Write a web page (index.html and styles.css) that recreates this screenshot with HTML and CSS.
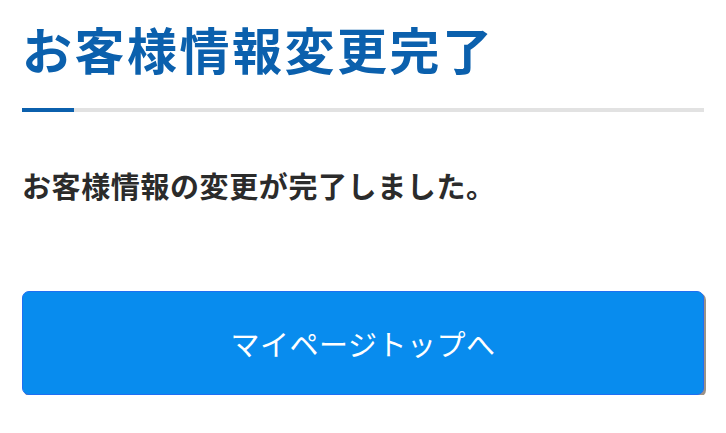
FILE: index.html
```html
<!DOCTYPE html>
<html lang="ja">
<head>
<meta charset="utf-8">
<link rel="stylesheet" href="styles.css">
</head>
<body>
<main class="page">
  <h1 class="title">お客様情報変更完了</h1>
  <div class="rule"><span class="rule-accent"></span></div>
  <p class="message">お客様情報の変更が完了しました。</p>
  <a class="btn" href="#">マイページトップへ</a>
</main>
</body>
</html>
```
FILE: styles.css
```css
html, body {
  margin: 0;
  padding: 0;
  background: #ffffff;
}
body {
  font-family: "Noto Sans CJK JP", "Noto Sans", sans-serif;
}
.page {
  padding: 20px 22px 0 22px;
  display: flex;
  flex-direction: column;
}
.title {
  margin: 0;
  font-size: 50px;
  line-height: 56px;
  font-weight: 700;
  color: #0b60ad;
  letter-spacing: 2.5px;
}
.rule {
  margin-top: 32px;
  height: 4px;
  background: #e2e2e2;
  width: 682px;
  display: flex;
}
.rule-accent {
  width: 52px;
  height: 4px;
  background: #0b60ad;
}
.message {
  margin: 53px 0 0 0;
  font-size: 29px;
  line-height: 40px;
  font-weight: 700;
  color: #2b2b2b;
  letter-spacing: 0.6px;
}
.btn {
  margin-top: 86px;
  width: 682px;
  height: 104px;
  box-sizing: border-box;
  border: 1px solid #1f6ff2;
  border-radius: 7px;
  background: #088cee;
  box-shadow: 2px 2px 0 #9a9288;
  color: #ffffff;
  text-decoration: none;
  font-size: 29px;
  font-weight: 400;
  display: flex;
  align-items: center;
  justify-content: center;
  letter-spacing: 0.5px;
}
```
